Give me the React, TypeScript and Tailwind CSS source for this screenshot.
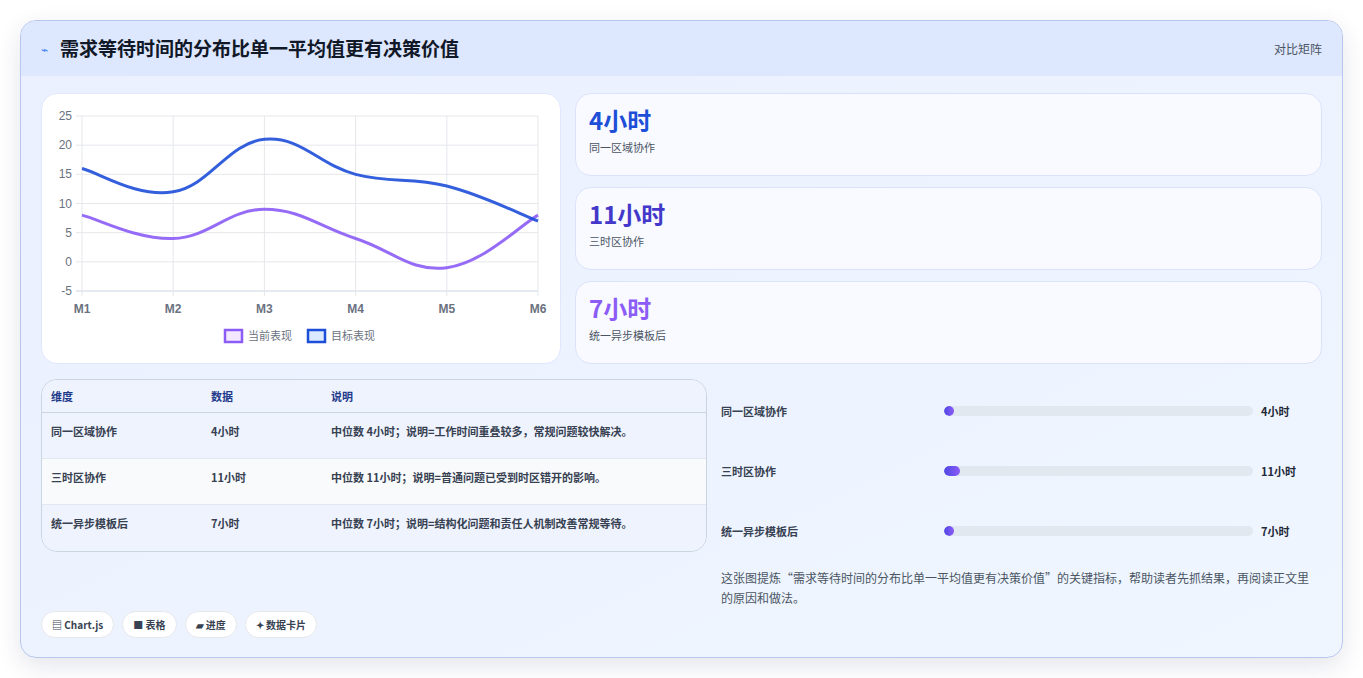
import React from 'react';

const font = { fontFamily: '"Noto Sans CJK SC", "Liberation Sans", sans-serif' };

const current = [8, 4, 9, 4, -1, 8];
const target = [16, 12, 21, 15, 13, 7];

// plot box inside the chart svg
const X0 = 40, X1 = 496, Y0 = 22, Y1 = 197;
const px = (i: number) => X0 + ((X1 - X0) / 5) * i;
const py = (v: number) => Y1 - ((v + 5) / 30) * (Y1 - Y0);

const smooth = (vals: number[]) => {
  const pts = vals.map((v, i) => [px(i), py(v)]);
  let d = `M${pts[0][0]},${pts[0][1]}`;
  for (let i = 0; i < pts.length - 1; i++) {
    const p0 = pts[i - 1] || pts[i], p1 = pts[i], p2 = pts[i + 1], p3 = pts[i + 2] || p2;
    const t = 0.2;
    const c1 = [p1[0] + (p2[0] - p0[0]) * t, p1[1] + (p2[1] - p0[1]) * t];
    const c2 = [p2[0] - (p3[0] - p1[0]) * t, p2[1] - (p3[1] - p1[1]) * t];
    d += ` C${c1[0]},${c1[1]} ${c2[0]},${c2[1]} ${p2[0]},${p2[1]}`;
  }
  return d;
};

const LineChart = () => (
  <svg width="520" height="271" viewBox="0 0 520 271">
    {[25, 20, 15, 10, 5, 0, -5].map(v => (
      <g key={v}>
        <line x1={X0 - 6} x2={X1} y1={py(v)} y2={py(v)} stroke={v === -5 ? '#cbd5e1' : '#e5e7eb'} />
        <text x={X0 - 10} y={py(v) + 4} textAnchor="end" fontSize="12" fill="#6b7280" fontFamily="Liberation Sans">{v}</text>
      </g>
    ))}
    {[0, 1, 2, 3, 4, 5].map(i => (
      <g key={i}>
        <line x1={px(i)} x2={px(i)} y1={Y0} y2={Y1 + 5} stroke="#e5e7eb" />
        <text x={px(i)} y={Y1 + 22} textAnchor="middle" fontSize="12" fontWeight="bold" fill="#6b7280" fontFamily="Liberation Sans">M{i + 1}</text>
      </g>
    ))}
    <path d={smooth(current)} fill="none" stroke="#8b5cf6" strokeWidth="3" opacity="0.9" />
    <path d={smooth(target)} fill="none" stroke="#1d4ed8" strokeWidth="3" opacity="0.9" />
    <rect x="183" y="236" width="17" height="12" fill="#f3e8ff" stroke="#8b5cf6" strokeWidth="2.5" />
    <text x="206" y="246" fontSize="11" fill="#6b7280" style={font}>当前表现</text>
    <rect x="266" y="236" width="17" height="12" fill="#dbeafe" stroke="#1d4ed8" strokeWidth="2.5" />
    <text x="289" y="246" fontSize="11" fill="#6b7280" style={font}>目标表现</text>
  </svg>
);

const stats = [
  { v: '4小时', l: '同一区域协作', c: 'text-[#1d4ed8]' },
  { v: '11小时', l: '三时区协作', c: 'text-[#4338ca]' },
  { v: '7小时', l: '统一异步模板后', c: 'text-[#8b5cf6]' },
];

const rows = [
  ['同一区域协作', '4小时', '中位数 4小时；说明=工作时间重叠较多，常规问题较快解决。', 4],
  ['三时区协作', '11小时', '中位数 11小时；说明=普通问题已受到时区错开的影响。', 11],
  ['统一异步模板后', '7小时', '中位数 7小时；说明=结构化问题和责任人机制改善常规等待。', 7],
] as const;

export default function App() {
  return (
    <div className="w-[1363px] h-[678px] bg-white pt-5 px-5" style={font}>
      <div className="h-[638px] rounded-2xl border border-[#b9c6ee] bg-gradient-to-br from-[#eaf0fe] to-[#eff6ff] overflow-hidden shadow-[0_8px_24px_rgba(30,41,89,0.12)]">
        <div className="h-[55px] bg-[#dde7fe] flex items-center justify-between px-5">
          <div className="flex items-center gap-3">
            <span className="text-[#3b82f6] text-xs">⌁</span>
            <h1 className="text-[19px] font-bold text-[#111827]">需求等待时间的分布比单一平均值更有决策价值</h1>
          </div>
          <span className="text-xs text-[#4b5563]">对比矩阵</span>
        </div>
        <div className="px-5 pt-[17px]">
          <div className="flex gap-[14px]">
            <div className="w-[520px] h-[271px] bg-white rounded-2xl border border-[#e0e7ff]">
              <LineChart />
            </div>
            <div className="flex-1 flex flex-col gap-[11px]">
              {stats.map(s => (
                <div key={s.l} className="h-[83px] bg-[#f8faff] rounded-2xl border border-[#dbe3fb] px-[13px] pt-[9px]">
                  <div className={`text-[24px] font-bold leading-[34px] ${s.c}`}>{s.v}</div>
                  <div className="text-[11px] text-[#4b5563] mt-0.5">{s.l}</div>
                </div>
              ))}
            </div>
          </div>
          <div className="flex gap-[14px] mt-[15px]">
            <div className="w-[666px]">
              <div className="rounded-2xl border border-[#cbd5e1] overflow-hidden text-[11px]">
                <div className="grid grid-cols-[160px_120px_1fr] h-[33px] items-center px-[9px] font-bold text-[#1e3a8a] border-b border-[#cbd5e1] bg-[#eef3fe]">
                  <span>维度</span><span>数据</span><span>说明</span>
                </div>
                {rows.map((r, i) => (
                  <div key={r[0]} className={`grid grid-cols-[160px_120px_1fr] h-[46px] pt-[10px] px-[9px] font-semibold text-[#374151] ${i === 1 ? 'bg-[#f8fafc]' : 'bg-[#eef3fe]'} ${i < 2 ? 'border-b border-[#e2e8f0]' : ''}`}>
                    <span>{r[0]}</span><span>{r[1]}</span><span>{r[2]}</span>
                  </div>
                ))}
              </div>
              <div className="flex gap-2 mt-[59px] text-[10px] font-bold text-[#374151]">
                {['▤ Chart.js', '■ 表格', '▰ 进度', '✦ 数据卡片'].map(p => (
                  <span key={p} className="px-2.5 h-[27px] flex items-center rounded-full bg-white border border-[#e5e7eb]">{p}</span>
                ))}
              </div>
            </div>
            <div className="flex-1 pt-[17px]">
              {rows.map(r => (
                <div key={r[0]} className="flex items-center h-[60px] pb-[30px] text-[11px] font-semibold text-[#374151]">
                  <span className="w-[223px]">{r[0]}</span>
                  <div className="w-[309px] h-[10px] rounded-full bg-[#e2e8f0] overflow-hidden">
                    <div className="h-full rounded-full bg-gradient-to-r from-[#4f46e5] to-[#8b5cf6]" style={{ width: `${(r[3] / 11) * 5.2}%`, minWidth: '10px' }} />
                  </div>
                  <span className="ml-[8px] font-bold text-[#1f2937]">{r[1]}</span>
                </div>
              ))}
              <p className="text-[12px] leading-[20px] text-[#4b5563] mt-[-8px] pr-2">
                这张图提炼“需求等待时间的分布比单一平均值更有决策价值”的关键指标，帮助读者先抓结果，再阅读正文里的原因和做法。
              </p>
            </div>
          </div>
        </div>
      </div>
    </div>
  );
}
